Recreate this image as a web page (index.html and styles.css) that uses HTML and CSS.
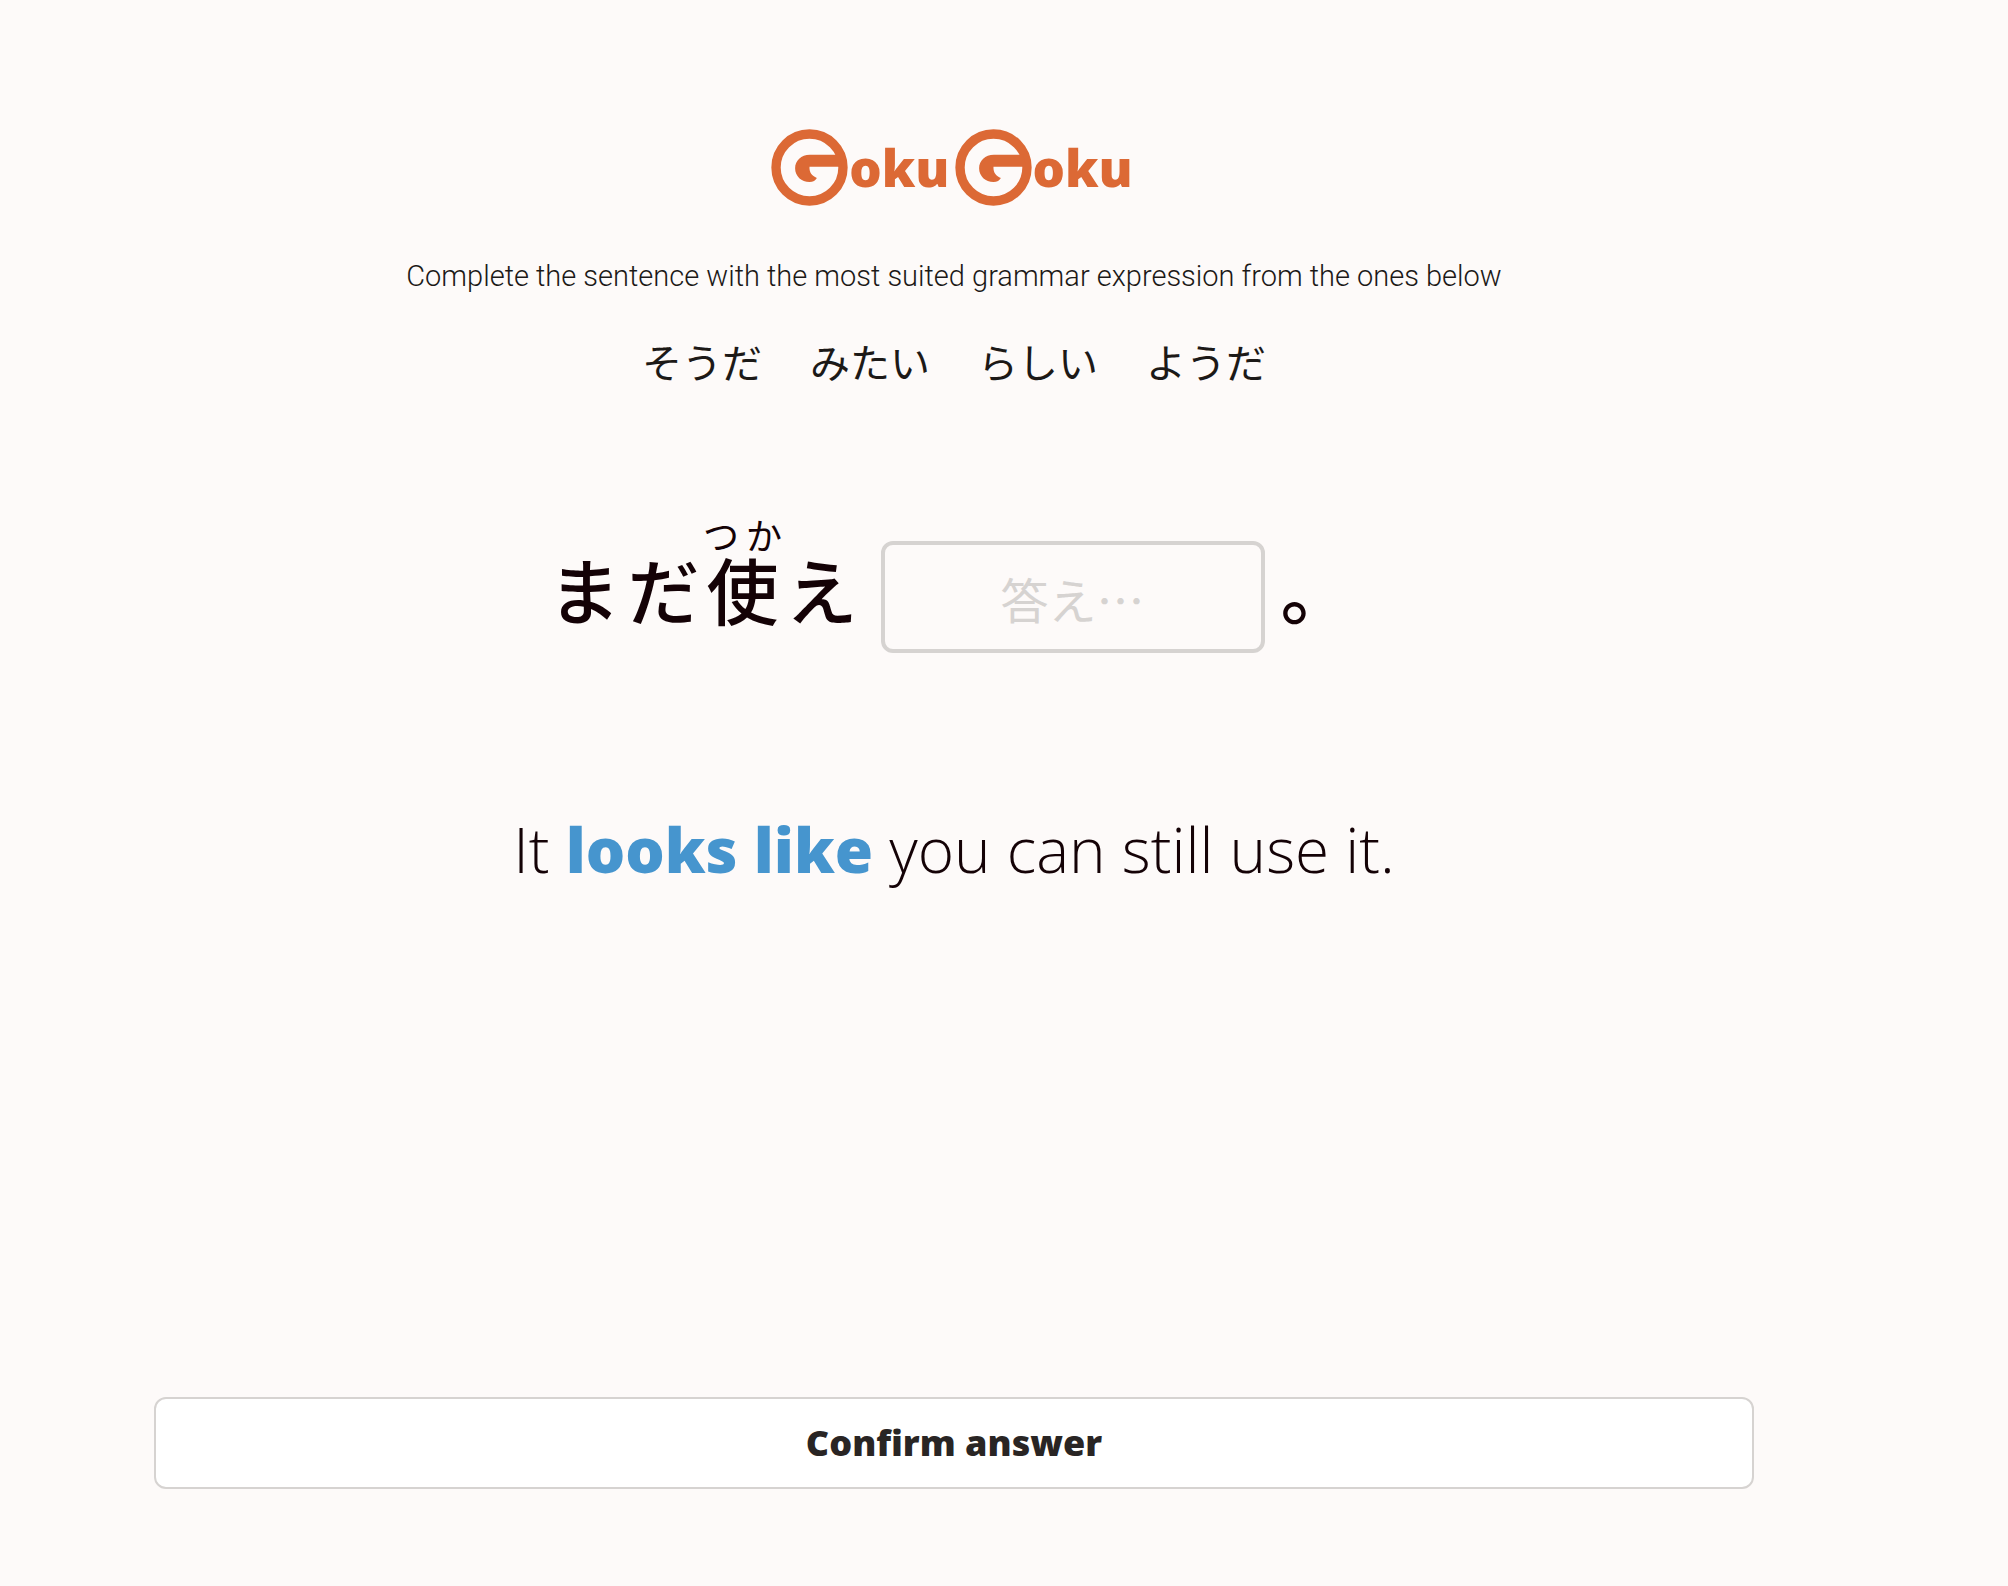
FILE: index.html
```html
<!DOCTYPE html>
<html lang="en">
<head>
  <meta charset="UTF-8">
  <meta name="viewport" content="width=device-width, initial-scale=1">
  <title>GokuGoku</title>
  <link rel="stylesheet" href="styles.css">
</head>
<body>

  <form class="quiz">
    <h1 class="logo">
      <svg class="logo-mark" viewBox="0 0 230 230" role="img" aria-label="G">
        <circle cx="115" cy="115" r="100" />
        <path d="M204 77H116C90 77 72 95 72 117c0 24 19 41 43 41 10 0 19-5 22-12-15-5-23-17-22-33H212Z" />
      </svg>
      <span class="logo-text">oku</span>
      <svg class="logo-mark" viewBox="0 0 230 230" role="img" aria-label="G">
        <circle cx="115" cy="115" r="100" />
        <path d="M204 77H116C90 77 72 95 72 117c0 24 19 41 43 41 10 0 19-5 22-12-15-5-23-17-22-33H212Z" />
      </svg>
      <span class="logo-text">oku</span>
    </h1>

    <p class="instruction">Complete the sentence with the most suited grammar expression from the ones below</p>

    <ul class="options" lang="ja">
      <li>そうだ</li>
      <li>みたい</li>
      <li>らしい</li>
      <li>ようだ</li>
    </ul>

    <div class="sentence" lang="ja">
      <span>まだ<ruby>使<rt>つか</rt></ruby>え</span>
      <input class="answer" type="text" name="answer" aria-label="Answer" placeholder="答え…" autocomplete="off">
      <span>。</span>
    </div>

    <p class="translation">It <strong>looks like</strong> you can still use it.</p>

    <button class="confirm" type="submit">Confirm answer</button>
  </form>

</body>
</html>
```

FILE: styles.css
```css
* { box-sizing: border-box; margin: 0; padding: 0; }

body {
  min-height: 100vh;
  padding: 128px 254px 97px 154px;
  background-color: #fdfaf9;
  color: #1c1917;
  font-family: "Open Sans", "Noto Sans CJK JP", sans-serif;
  font-weight: 300;
}

.quiz { display: flex; flex-direction: column; align-items: center; min-height: calc(100vh - 225px); }

.logo { display: flex; align-items: center; gap: 1px; height: 78px; color: #dc6935; }
.logo-mark { width: 77px; height: 77px; }
.logo-mark circle { fill: none; stroke: currentColor; stroke-width: 28; }
.logo-mark path { fill: currentColor; }
.logo-text { margin-right: 4px; font-family: "Noto Sans", sans-serif; font-size: 51px; font-weight: 900; line-height: 80px; }

.instruction { margin-top: 48px; font-family: Roboto, sans-serif; font-size: 29px; line-height: 44px; text-align: center; }

.options,
.sentence { font-family: "Noto Sans CJK JP", sans-serif; }

.options { display: flex; flex-wrap: wrap; justify-content: center; gap: 48px; margin-top: 33px; list-style: none; font-size: 40px; font-weight: 400; line-height: 60px; }

.sentence { display: flex; align-items: baseline; gap: 16px; margin-top: 127px; color: #140206; font-size: 72px; font-weight: 500; line-height: 112px; letter-spacing: 7px; }
.sentence rt { font-size: 36px; font-weight: 400; line-height: 40px; }

.answer {
  width: 384px;
  height: 112px;
  padding: 2px 16px 0;
  border: 4px solid #d6d3d1;
  border-radius: 12px;
  background: transparent;
  color: inherit;
  font-family: inherit;
  font-size: 48px;
  font-weight: 400;
  text-align: center;
}
.answer::placeholder { color: #d6d3d1; }

.translation { margin-top: 151px; color: #140206; font-size: 62px; line-height: 90px; text-align: center; }
.translation strong { color: #4695ce; font-weight: 800; }

.confirm {
  width: 100%;
  margin-top: auto;
  padding: 16px;
  border: 2px solid #d6d3d1;
  border-radius: 12px;
  background: white;
  color: #292524;
  font-family: "Noto Sans", sans-serif;
  font-size: 36px;
  font-weight: 900;
  line-height: 56px;
  cursor: pointer;
}
```
